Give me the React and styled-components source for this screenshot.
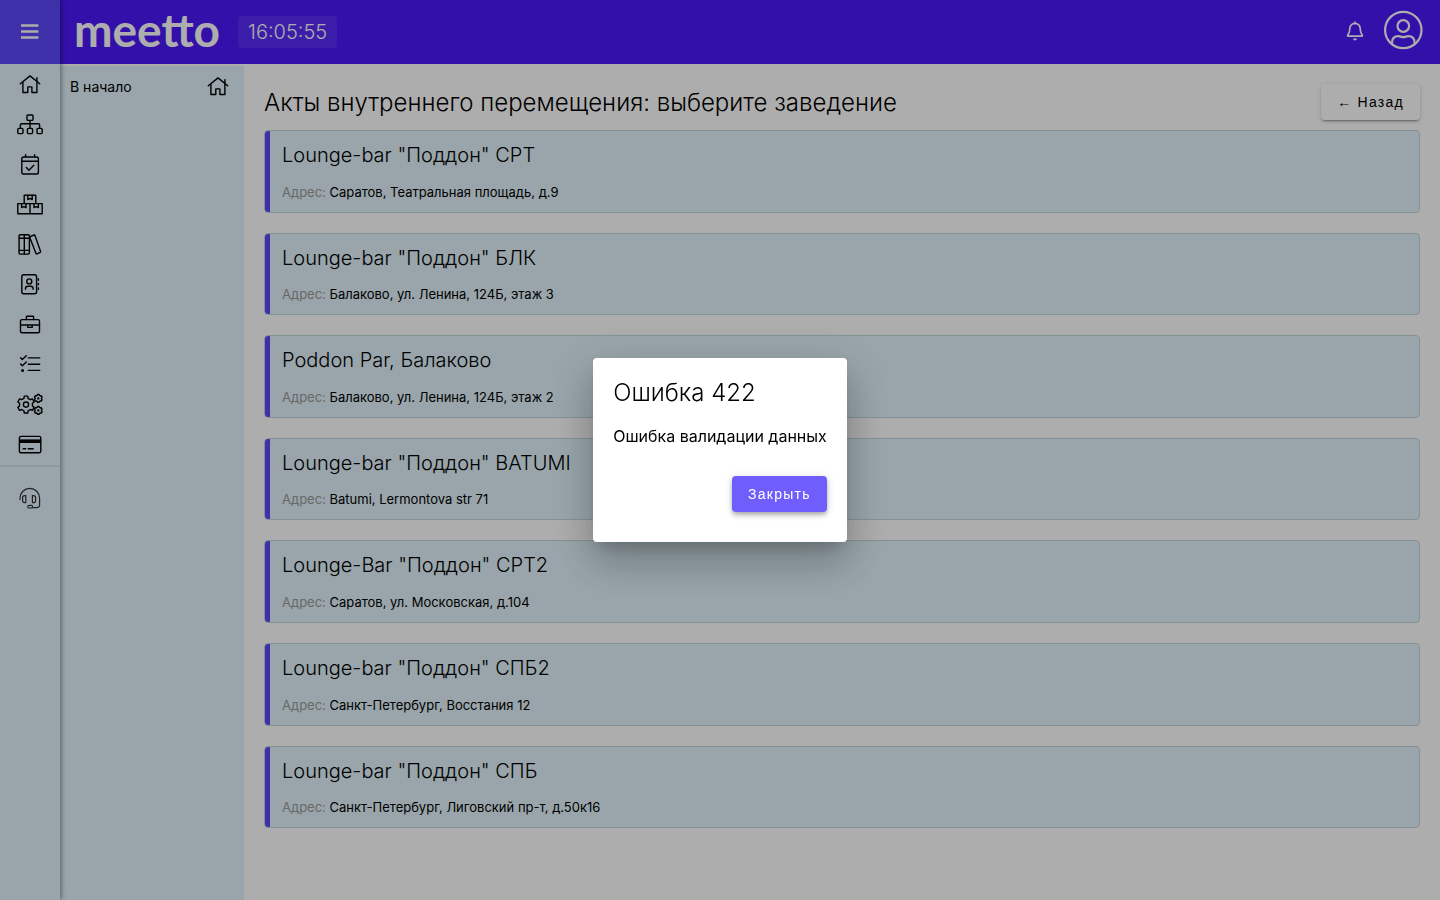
import React from "react";
import styled, { ThemeProvider, createGlobalStyle } from "styled-components";

const theme = {
  colors: {
    header: "#4b19fa",
    accent: "#5a48fa",
    button: "#6f5efc",
    panel: "#e2f4fb",
    border: "#c3d7de",
    muted: "#9a9a9a",
  },
};

const GlobalStyle = createGlobalStyle`
  * {
    box-sizing: border-box;
  }

  body {
    margin: 0;
    background: #fff;
    color: #000;
    font-family: Inter, "Noto Sans", sans-serif;
    font-size: 14px;
  }

  h1, h2, p, ul {
    margin: 0;
    padding: 0;
  }

  a {
    color: inherit;
    text-decoration: none;
  }
`;

const Layout = styled.div`
  display: flex;
  min-height: 100vh;
`;

const Sidebar = styled.aside`
  position: relative;
  z-index: 1;
  flex: 0 0 60px;
  background: ${({ theme }) => theme.colors.panel};
  box-shadow: 0 0 6px rgba(0, 0, 0, 0.6);
`;

const MenuButton = styled.button`
  display: flex;
  align-items: center;
  justify-content: center;
  width: 100%;
  height: 64px;
  padding: 0;
  border: 0;
  background: ${({ theme }) => theme.colors.accent};
  color: #fff;
`;

const NavList = styled.ul`
  list-style: none;
  padding-bottom: 1px;
  border-bottom: 2px solid #d2e2e8;
`;

const NavLink = styled.a`
  display: flex;
  align-items: center;
  justify-content: center;
  height: 40px;
`;

const SupportLink = styled(NavLink)`
  margin-top: 11px;
  color: #333;
`;

const Page = styled.div`
  flex: 1;
  min-width: 0;
  display: flex;
  flex-direction: column;
`;

const Header = styled.header`
  display: flex;
  align-items: center;
  height: 64px;
  padding: 0 16px 0 14px;
  background: ${({ theme }) => theme.colors.header};
  color: #fff;
`;

const Logo = styled.a`
  font-family: Lato, sans-serif;
  font-size: 46px;
  font-weight: 700;
  line-height: 60px;
  padding-bottom: 4px;
`;

const Clock = styled.time`
  margin-left: 18px;
  padding: 0 10px;
  border-radius: 4px;
  background: rgba(255, 255, 255, 0.08);
  font-size: 20px;
  font-weight: 300;
  line-height: 32px;
`;

const HeaderActions = styled.div`
  display: flex;
  align-items: center;
  gap: 16px;
  margin-left: auto;
  padding-bottom: 4px;
`;

const IconButton = styled.button`
  display: flex;
  padding: 0;
  border: 0;
  background: none;
  color: inherit;
`;

const Columns = styled.div`
  flex: 1;
  display: flex;
`;

const SubMenu = styled.nav`
  flex: 0 0 184px;
  margin-top: 2px;
  background: ${({ theme }) => theme.colors.panel};
`;

const SubMenuLink = styled.a`
  display: flex;
  align-items: center;
  justify-content: space-between;
  height: 40px;
  padding: 0 12px 0 10px;
`;

const Content = styled.main`
  flex: 1;
  min-width: 0;
  padding: 20px;
`;

const TitleRow = styled.div`
  display: flex;
  align-items: center;
  justify-content: space-between;
  margin-bottom: 10px;
`;

const Title = styled.h1`
  padding-top: 2px;
  font-size: 24px;
  font-weight: 300;
  line-height: 34px;
`;

const Button = styled.button`
  height: 36px;
  padding: 0 16px;
  border: 0;
  border-radius: 4px;
  background: ${({ $primary, theme }) =>
    $primary ? theme.colors.button : "#fff"};
  color: ${({ $primary }) => ($primary ? "#fff" : "#000")};
  font-family: "Liberation Sans", Arial, sans-serif;
  font-size: 14px;
  font-weight: 400;
  letter-spacing: 0.09em;
  box-shadow: ${({ $primary }) =>
    $primary
      ? "0 2px 4px -1px rgba(0, 0, 0, 0.2), 0 4px 5px rgba(0, 0, 0, 0.14), 0 1px 10px rgba(0, 0, 0, 0.12)"
      : "0 3px 1px -2px rgba(0, 0, 0, 0.2), 0 2px 2px rgba(0, 0, 0, 0.14), 0 1px 5px rgba(0, 0, 0, 0.12)"};
`;

const PlaceList = styled.div`
  display: flex;
  flex-direction: column;
  gap: 20px;
`;

const PlaceCard = styled.a`
  display: block;
  padding: 10px 12px 12px 17px;
  border: 1px solid ${({ theme }) => theme.colors.border};
  border-radius: 4px;
  background: ${({ theme }) =>
    `linear-gradient(90deg, ${theme.colors.accent} 5px, ${theme.colors.panel} 5px)`};
`;

const PlaceName = styled.h2`
  margin-bottom: 14px;
  font-size: 20px;
  font-weight: 300;
  line-height: 1.43;
`;

const PlaceAddress = styled.p`
  font-size: 13px;
  line-height: 16px;
`;

const Label = styled.span`
  color: ${({ theme }) => theme.colors.muted};
`;

const Backdrop = styled.div`
  position: fixed;
  inset: 0;
  z-index: 10;
  display: flex;
  align-items: center;
  justify-content: center;
  background: rgba(0, 0, 0, 0.32);
`;

const Dialog = styled.div`
  padding: 20px 20px 30px;
  border-radius: 4px;
  background: #fff;
  box-shadow: 0 11px 15px -7px rgba(0, 0, 0, 0.2),
    0 24px 38px 3px rgba(0, 0, 0, 0.14), 0 9px 46px 8px rgba(0, 0, 0, 0.12);
`;

const DialogTitle = styled.h2`
  font-size: 24px;
  font-weight: 300;
  line-height: 30px;
`;

const DialogText = styled.p`
  margin: 16px 0 28px;
  font-size: 16px;
  line-height: 24px;
`;

const DialogActions = styled.div`
  display: flex;
  justify-content: flex-end;
`;

const Svg = styled.svg`
  display: block;
  flex: none;
  fill: none;
  stroke: currentColor;
  stroke-width: ${({ $stroke }) => $stroke || 1.4};
  stroke-linecap: round;
  stroke-linejoin: round;
`;

function Icon({ children, stroke }) {
  return (
    <Svg width="28" height="24" viewBox="0 0 28 24" $stroke={stroke} aria-hidden="true">
      {children}
    </Svg>
  );
}

// outline of a cog with rounded-off teeth
function gearPath(cx, cy, outer, inner, teeth) {
  const points = [];
  const step = (Math.PI * 2) / teeth;
  for (let i = 0; i < teeth; i++) {
    const a = (i + 0.5) * step;
    [
      [inner, -0.3],
      [outer, -0.19],
      [outer, 0.19],
      [inner, 0.3],
    ].forEach(([r, k]) => {
      const x = cx + r * Math.cos(a + k * step);
      const y = cy + r * Math.sin(a + k * step);
      points.push(`${x.toFixed(2)} ${y.toFixed(2)}`);
    });
  }
  return `M${points.join("L")}Z`;
}

const homeShape = (
  <path d="M4.3 11.8 14 3.9l9.7 7.9M6.9 10v10.5h4.9v-5.6h4.1v5.6h5V10M20.9 9.2V5.6" />
);

const navItems = [
  { label: "Главная", shape: homeShape },
  {
    label: "Структура",
    shape: (
      <>
        <rect x="11" y="3" width="6" height="5.4" rx="1" />
        <rect x="1.8" y="16.4" width="5.2" height="5.2" rx="1" />
        <rect x="11.4" y="16.4" width="5.2" height="5.2" rx="1" />
        <rect x="21" y="16.4" width="5.2" height="5.2" rx="1" />
        <path d="M14 8.4v8M4.4 16.4v-3.6q0-1 1-1h17.2q1 0 1 1v3.6" />
      </>
    ),
  },
  {
    label: "Календарь",
    shape: (
      <>
        <rect x="5.8" y="5" width="16.6" height="17" rx="1.8" />
        <path d="M5.8 9.2h16.6M9.6 2.8V5M18.6 2.8V5M10.3 15.6l2.6 2.6 4.9-4.9" />
      </>
    ),
  },
  {
    label: "Склад",
    shape: (
      <>
        <path d="M8.2 11.4V3.2h11.6v8.2M1.8 11.6h24.4v10.2H1.8zM14 11.6v10.2" />
        <path d="M11.8 3.2v4.4l2.2-1.2 2.2 1.2V3.2M5.6 11.6v4l2.2-1 2.2 1v-4M18 11.6v4l2.2-1 2.2 1v-4" />
      </>
    ),
  },
  {
    label: "Справочники",
    shape: (
      <>
        <rect x="3.1" y="2.7" width="10.3" height="19.4" rx="1" />
        <path d="M8.3 2.7v19.4M3.1 6.2h10.3M3.1 18.4h10.3" />
        <path d="M14.1 4.7l4-1.7q.6-.2.8.4l5.7 16q.2.7-.4 1l-3.2 1.4q-.7.3-1-.4L13.8 5.4" />
      </>
    ),
  },
  {
    label: "Контакты",
    shape: (
      <>
        <rect x="5.8" y="2.7" width="14.8" height="19" rx="2" />
        <circle cx="13.3" cy="9.4" r="2.5" />
        <path d="M9.5 17.2v-.6q0-2.3 2.3-2.3h3q2.3 0 2.3 2.3v.6M22.4 6.8v1.4M22.4 11.4v1.4M22.4 16v1.4" />
      </>
    ),
  },
  {
    label: "Персонал",
    shape: (
      <>
        <rect x="4.5" y="7.6" width="19" height="13.1" rx="1.5" />
        <path d="M10.4 7.6V4.9q0-.7.7-.7h5.8q.7 0 .7.7v2.7M4.5 13h19M11.8 13v2.4h4.4V13" />
      </>
    ),
  },
  {
    label: "Задачи",
    shape: (
      <>
        <path d="M12.3 5.9h11.4M12.3 12.2h11.4M12.3 18.4h11.4M4.6 5.8l1.7 1.7 4-3.8M4.6 12.1l1.7 1.7 4-3.8" />
        <circle cx="6.6" cy="18.4" r=".8" fill="currentColor" />
      </>
    ),
  },
  {
    label: "Настройки",
    shape: (
      <>
        <path d={gearPath(10, 12.6, 8.6, 6.6, 6)} />
        <circle cx="10" cy="12.6" r="2.6" />
        <path d={gearPath(22.3, 6.4, 4, 3.3, 6)} />
        <circle cx="22.3" cy="6.4" r=".5" />
        <path d={gearPath(22.3, 18.4, 4, 3.3, 6)} />
        <circle cx="22.3" cy="18.4" r=".5" />
      </>
    ),
  },
  {
    label: "Оплата",
    shape: (
      <>
        <rect x="3.4" y="4.4" width="21.4" height="16.4" rx="1.6" />
        <path d="M3.4 7.4h21.4v3.6H3.4z" fill="currentColor" stroke="none" />
        <path d="M7.2 16.7h2.4M12.2 16.7h5" />
      </>
    ),
  },
];

const places = [
  { name: 'Lounge-bar "Поддон" СРТ', address: "Саратов, Театральная площадь, д.9" },
  { name: 'Lounge-bar "Поддон" БЛК', address: "Балаково, ул. Ленина, 124Б, этаж 3" },
  { name: "Poddon Par, Балаково", address: "Балаково, ул. Ленина, 124Б, этаж 2" },
  { name: 'Lounge-bar "Поддон" BATUMI', address: "Batumi, Lermontova str 71" },
  { name: 'Lounge-Bar "Поддон" СРТ2', address: "Саратов, ул. Московская, д.104" },
  { name: 'Lounge-bar "Поддон" СПБ2', address: "Санкт-Петербург, Восстания 12" },
  { name: 'Lounge-bar "Поддон" СПБ', address: "Санкт-Петербург, Лиговский пр-т, д.50к16" },
];

function App() {
  return (
    <ThemeProvider theme={theme}>
      <GlobalStyle />
      <Layout>
        <Sidebar>
          <MenuButton aria-label="Меню">
            <Svg width="18" height="16" viewBox="0 0 18 16" $stroke={2.6}>
              <path d="M0 1.5h17.4M0 7.5h17.4M0 13.5h17.4" strokeLinecap="butt" />
            </Svg>
          </MenuButton>
          <NavList>
            {navItems.map((item) => (
              <li key={item.label}>
                <NavLink href="#" aria-label={item.label}>
                  <Icon>{item.shape}</Icon>
                </NavLink>
              </li>
            ))}
          </NavList>
          <SupportLink href="#" aria-label="Поддержка">
            <Icon stroke={1.2}>
              <path d="M4 13.6v-1.4a9.8 9.8 0 0 1 19.6 0v6.6q0 2.8-2.8 2.8h-4" />
              <rect x="11.8" y="19.4" width="4.8" height="2.6" rx="1.3" />
              <path d="M9.8 9.6v7H8.6q-2 0-2-2.2v-2.6q0-2.2 2-2.2zM16.4 9.6v7h1.2q2 0 2-2.2v-2.6q0-2.2-2-2.2z" />
            </Icon>
          </SupportLink>
        </Sidebar>
        <Page>
          <Header>
            <Logo href="#">meetto</Logo>
            <Clock>16:05:55</Clock>
            <HeaderActions>
              <IconButton aria-label="Уведомления">
                <Svg width="24" height="24" viewBox="0 0 24 24" $stroke={1.7}>
                  <path d="M11 4v1.6M11 5.4a5.2 5.2 0 0 0-5.2 5.2c0 4.2-1 5.2-2 6.4-.5.7-.2 1.2.5 1.2h13.4c.7 0 1-.5.5-1.2-1-1.2-2-2.2-2-6.4A5.2 5.2 0 0 0 11 5.4z" />
                  <path d="M8.8 20.6h4.4q-.4 1.9-2.2 1.9t-2.2-1.9z" fill="currentColor" stroke="none" />
                </Svg>
              </IconButton>
              <IconButton aria-label="Профиль">
                <Svg width="40" height="40" viewBox="0 0 40 40" $stroke={2.2}>
                  <circle cx="19.3" cy="20" r="18.2" />
                  <circle cx="19.3" cy="16" r="5.8" />
                  <path d="M8 34v-1.2q0-6.6 6.4-6.6c2 0 2.6.9 4.9.9s2.9-.9 4.9-.9q6.4 0 6.4 6.6V34" />
                </Svg>
              </IconButton>
            </HeaderActions>
          </Header>
          <Columns>
            <SubMenu>
              <SubMenuLink href="#">
                В начало
                <Icon>{homeShape}</Icon>
              </SubMenuLink>
            </SubMenu>
            <Content>
              <TitleRow>
                <Title>Акты внутреннего перемещения: выберите заведение</Title>
                <Button>← Назад</Button>
              </TitleRow>
              <PlaceList>
                {places.map((place) => (
                  <PlaceCard href="#" key={place.name}>
                    <PlaceName>{place.name}</PlaceName>
                    <PlaceAddress>
                      <Label>Адрес:</Label> {place.address}
                    </PlaceAddress>
                  </PlaceCard>
                ))}
              </PlaceList>
            </Content>
          </Columns>
        </Page>
      </Layout>
      <Backdrop>
        <Dialog role="alertdialog" aria-labelledby="error-title" aria-describedby="error-text">
          <DialogTitle id="error-title">Ошибка 422</DialogTitle>
          <DialogText id="error-text">Ошибка валидации данных</DialogText>
          <DialogActions>
            <Button $primary>Закрыть</Button>
          </DialogActions>
        </Dialog>
      </Backdrop>
    </ThemeProvider>
  );
}

export default App;
